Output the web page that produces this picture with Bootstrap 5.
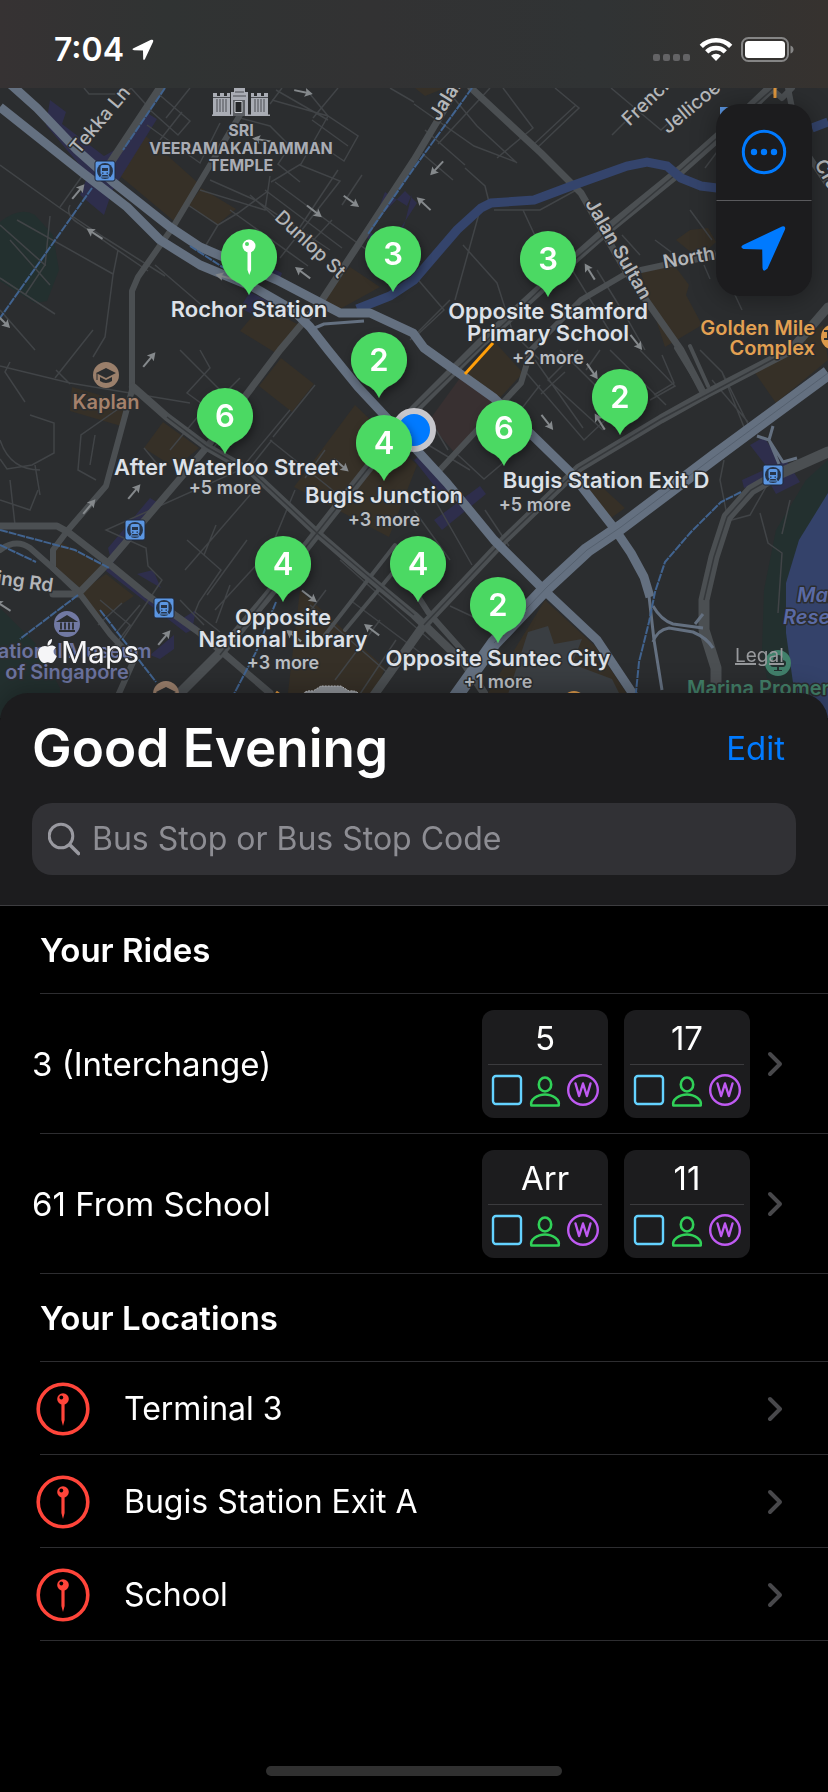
<!DOCTYPE html>
<html lang="en" data-bs-theme="dark">
<head>
<meta charset="utf-8">
<meta name="viewport" content="width=device-width, initial-scale=1">
<title>Bus Stops</title>
<link href="https://cdn.jsdelivr.net/npm/bootstrap@5.3.0/dist/css/bootstrap.min.css" rel="stylesheet">
<style>
  body { background: #000; color: #fff; font-family: Inter, "Liberation Sans", sans-serif; font-size: 32px; line-height: 40px; }
  .app { min-height: 100vh; }
  .statusbar { height: 88px; padding: 12px 34px 0 54px; background: linear-gradient(90deg, #363233, #303333 20%, #323233 45%, #303334 72%, #36322f); }
  .clock { font-size: 32px; font-weight: 600; }
  .map-area { height: 630px; background: #2b2d2f; }
  .map-tools { top: 16px; right: 16px; width: 96px; background: #1c1c1e; border-radius: 24px; box-shadow: 0 2px 24px rgba(0,0,0,.35); }
  .map-tools .btn { height: 96px; border-radius: 0; }
  .map-tools .btn + .btn { border-top: 1px solid #5a5a5d; }
  .sheet-head { margin-top: -25px; padding: 32px 32px 30px; background: #1c1c1e; border-bottom: 1px solid #3d3d40; border-radius: 28px 28px 0 0; box-shadow: 0 -4px 24px rgba(0,0,0,.25); }
  .greeting { font-size: 53px; line-height: 46px; font-weight: 600; }
  .edit-btn { color: #007aff; font-size: 33px; line-height: 40px; padding: 0 11px; }
  .search { height: 72px; margin-top: 32px; padding: 0 16px; background: #313135; border-radius: 20px; gap: 12px; }
  .search input { font-size: 32px; line-height: 40px; color: #fff; outline: 0; }
  .search input::placeholder { color: #8d8d93; opacity: 1; }
  .divided { position: relative; }
  .divided::after { content: ""; position: absolute; left: 40px; right: 0; bottom: 0; border-bottom: 1px solid #2d2d30; }
  .group-title { height: 88px; padding: 0 40px; font-size: 33px; font-weight: 600; line-height: 40px; }
  .ride { height: 140px; padding: 0 44px 0 32px; font-size: 33px; }
  .place { height: 93px; padding: 0 44px 0 36px; }
  .place-name { margin-left: 34px; }
  a.divided { color: #fff; text-decoration: none; }
  .arrival { width: 126px; height: 108px; padding: 6px; background: #1c1c1e; border-radius: 12px; }
  .arrival-time { height: 49px; line-height: 44px; text-align: center; border-bottom: 1px solid #3b3b3e; }
  .home-bar { width: 296px; height: 10px; margin: auto auto 16px; border-radius: 5px; background: #303030; }
  svg { display: block; flex: none; }
  .lbl { font-size: 22px; font-weight: 600; fill: #dde1e8; text-anchor: middle; paint-order: stroke; stroke: #2b2d2f; stroke-width: 3px; stroke-linejoin: round; }
  .more { font-size: 18px; fill: #b9bdc2; }
  .street { font-size: 19px; font-weight: 500; fill: #b4b6b9; }
  .sight { font-size: 16px; font-weight: 700; fill: #a9acb4; }
  .poi { font-size: 20px; }
  .pin-num { font-size: 31px; font-weight: 600; fill: #fff; text-anchor: middle; }
</style>
</head>
<body>
<svg width="0" height="0" class="position-absolute" aria-hidden="true">
  <symbol id="i-chev" viewBox="0 0 16 26"><path d="M3 3l10 10L3 23" fill="none" stroke="#48484b" stroke-width="4" stroke-linecap="round" stroke-linejoin="round"/></symbol>
  <symbol id="i-load" viewBox="0 0 108 34">
    <rect x="2" y="3" width="28" height="28" rx="3" fill="none" stroke="#64d2ff" stroke-width="2.4"/>
    <g fill="none" stroke="#30d158" stroke-width="2.6"><ellipse cx="54" cy="11.500" rx="6.200" ry="7"/><path d="M40.300 32.500c-1.500-6 6-11 13.700-11s15.200 5 13.700 11z" stroke-linejoin="round"/></g>
    <circle cx="92" cy="17" r="14.800" fill="none" stroke="#bf5af2" stroke-width="2.400"/>
    <path d="M84.500 10.500l3.600 12.500 3.900-12.500 3.900 12.500 3.600-12.500" fill="none" stroke="#bf5af2" stroke-width="2.400" stroke-linejoin="round" stroke-linecap="round"/>
  </symbol>
  <symbol id="i-place" viewBox="0 0 54 54"><circle cx="27" cy="27" r="24.800" fill="none" stroke="#ff453a" stroke-width="3.600"/><path d="M25.400 21h3.200v17l-1.600 6-1.600-6z" fill="#ff453a"/><circle cx="27" cy="17" r="5.800" fill="#ff453a"/><circle cx="25.300" cy="15.500" r="1.900" fill="#000"/></symbol>
</svg>

<main class="app d-flex flex-column">
  <header class="statusbar d-flex align-items-center justify-content-between">
    <div class="d-flex align-items-center gap-2">
      <span class="clock">7:04</span>
      <svg width="22" height="22" viewBox="0 0 22 22" aria-hidden="true"><path d="M1 9.500L19 .8q3-.8 2 2.200L13 20q-1.200 2.200-1.800 0L11 11.500 2 11.300q-2.500-.6-1-1.800z" fill="#fff"/></svg>
    </div>
    <div class="d-flex align-items-center">
      <svg width="142" height="28" viewBox="0 0 142 28" aria-hidden="true">
        <g fill="#636365"><rect x="1" y="18" width="7" height="7" rx="2"/><rect x="11" y="18" width="7" height="7" rx="2"/><rect x="21" y="18" width="7" height="7" rx="2"/><rect x="31" y="18" width="7" height="7" rx="2"/></g>
        <g fill="none" stroke="#fff" stroke-width="4.600"><path d="M49.300 10.300a21 21 0 0 1 29.400 0"/><path d="M54.700 15.800a13.400 13.400 0 0 1 18.600 0"/></g><path d="M64 25l-5-5.300a7.500 7.500 0 0 1 10 0z" fill="#fff"/>
        <rect x="90" y="2" width="46" height="23" rx="6.500" fill="none" stroke="#858585" stroke-width="2"/><rect x="93" y="5" width="40" height="17" rx="3.500" fill="#fff"/><path d="M138.500 9.500q3 1 3 4t-3 4z" fill="#858585"/>
      </svg>
    </div>
  </header>

  <section class="map-area position-relative overflow-hidden" aria-label="Map">
    <svg width="100%" height="630" viewBox="0 88 828 630" preserveAspectRatio="xMidYMid slice">
      <defs>
        <symbol id="pin" viewBox="-40 -40 80 90" overflow="visible"><path d="M0 38C-3 32-6 28-12 25.300A28 28 0 1 1 12 25.300C6 28 3 32 0 38z" fill="#4cd964"/></symbol>
        <filter id="sh" x="-30%" y="-30%" width="170%" height="170%"><feDropShadow dx="2" dy="4" stdDeviation="4" flood-color="#000" flood-opacity=".4"/></filter>
        <g id="arw" fill="none" stroke="#85898c" stroke-width="2"><path d="M-9 0H5"/><path d="M2-4.500L10 0 2 4.500 3.500 0z" fill="#85898c" stroke="none"/></g>
        <g id="mrt"><rect x="-10" y="-10" width="20" height="20" rx="2" fill="#5b96e2" stroke="#20283a"/><circle r="8" fill="#263449"/><rect x="-4.500" y="-6" width="9" height="10" rx="2" fill="#5b96e2"/><path d="M-3-3h6v3h-6zM-3 1.500h1.500v1.200H-3zM1.500 1.500H3v1.200H1.500z" fill="#263449"/><path d="M-3 4l-2 3M3 4l2 3M-4 6h8" stroke="#5b96e2"/></g>
        <g id="school"><circle r="13" fill="#9a7f6b"/><path d="M-10-2L0-7 10-2 0 3zM-6 2v4q6 4 12 0V2L0 5z" fill="#2b2d2f"/><path d="M-9-2v7" stroke="#2b2d2f"/></g>
      </defs>
      <rect y="88" width="828" height="630" fill="#2b2d2f"/>
      <g fill="#23302f"><path d="M0 222q20-16 35-7l18 20 6 35-12 31-12 2-35-22z"/><path d="M0 608l35 35 25 45v30H0z"/><path d="M828 460l-22 20-30 50-12 60-2 60 12 68h54z"/></g>
      <path d="M828 493l-29 47-13 43v50l12 85h30z" fill="#34426a"/>
      <g fill="#363027"><path d="M139 130l58 52-22 40-62-52zM201 188l35 21-19 16-28-20zM350 267l30 20-40 22-22-8zM262 305l37 20-20 30-39-24zM72 387l52 15-3 24-51-15zM163 422l36 26-24 20-31-20zM281 358l33 26-22 28-33-26zM56 540l47 24-18 28-32-26zM80 592l26-18 28 22-30 20-12-1zM355 405l62 60-28 72-95-50z"/><path d="M641 273l33-8 15 20-3 10 16 30-37 22zM676 240l14-10 18-2 8 14-18 16zM753 370l70-45 5 35-52 43zM493 340l30 33-28 30-32-24zM581 468l44 40-14 10-28-36zM545 600l50 46 40 60H480zM300 590l85 78-20 50h-80zM415 88h30l-20 8z"/></g>
      <path d="M460 378l38 28-44 46-26-30z" fill="#383031"/>
      <path d="M528 632l20-6 6 18 28-5-10 25 40 15 20 40H500z" fill="#3a3e42"/>
      <g fill="#2e2e4c"><path d="M50 100l16 12-4 12 42 32 18-10 25-33 10 6-45 72-8 24-24-20 8-20-42-50zM385 192l22 14 5-12-10 40-12 12-20-14zM362 235l25 14 30-46-12-12zM262 263l20 10-4 12-14-6zM250 292l20 10-14 14-16-8zM108 548l42-50 10 6-48 60zM108 565l90 62-12 6-80-62zM137 574l16-4 8 18zM180 620l16-10-4 20zM150 655l24-20v14l-14 10zM434 520l46-34 6 8-44 36zM420 455l30 35-6 8-30-38zM750 445l14-8 16 24-10 10zM742 480l44-20 14 22-24 12-8-14-24 8z"/></g>
      <!-- side streets -->
      <g fill="none" stroke="#414447" stroke-width="1.500">
        <path d="M0 165l60 43 45 30 60 38M60 207l25-35M17 220l96 54M0 278l55 36M118 250l-5 25-8 62-12 20M50 216l-5 50M155 265l50 43M93 330l-38 48M0 310l35 40M70 205q-5 10 8 18l70 48M84 88l5 6 36 0 6-6 20 22M150 110l28 25 12-14-35-30M190 88l-24 30M147 125l53 38 20-40M160 140l22-28M240 118l30 8 20 20-12 18 22 18M272 100l56 16 30 20-14 25-30-20M270 104l12-16M328 116l-27 48-30 18M310 94l18 22M338 88l-25 30M312 120l36 26M390 88l24 14M300 165l40 16-60 77M276 90l52 30M200 190l65 20 5-34M210 180l45 20 75 50M265 190l77 58M230 210l78 56M188 205l30 20 20-12 30-22M218 225l-12 20M338 170l-40 60M275 182l100 74M362 175l-20 30M250 195l70 62M308 246l24-26"/>
        <path d="M414 104l60 42 42 16M447 90l30 36 40 37M490 88l-52 56M503 88l30 40-36 30M555 88l24 20-42 40M611 88l50 42 15-14M576 105l-43 40M612 135l40-40M425 130l40 35M418 150l35 30M465 168l20 18 5 20M480 210l-25 90M494 210h46l40-22M523 210l28 60M463 245l34 38 16 50 30 30M414 275l30 35-30 28M450 300l-40 40M560 250l55 90M580 255l-24 30M597 270l28 45 20 35M640 255l-18-20M690 210l22 30M655 240l16 12 2 12M704 265l6 14M714 250l28 60M765 88l-60 80"/>
        <path d="M0 366l70 17 120 20M10 362l-5 10 20 30M30 415l24 8v30l-22 12-25 4-7-10M70 384l-14-14M131 400l-50 35-3 35 18 10M95 435l-5 30M35 465l5 30M180 350l40 40-50 60M200 350l10 18-23 25 44 32-20 26M144 448l18 22M240 378l-40 40M270 440l60 48 12 12M272 440l-20 25M315 385l-42 52M325 450l-20 28M290 410l-50 60-134 60 40 18 2 18 14 14-40 60M187 540l34 30-22 32-4 10 25 20M216 525l-12 30M250 495l-65 75M295 490l-25 60-55 60M247 540l-40 55M230 585l-14 38M100 600l30 25-30 40M122 603l-24 22M140 605l-24 28M180 600l24 25"/>
        <path d="M524 370l60 70 35-33M535 360l48 68M560 350l60 60M578 350l-30 30 55 50M540 385l-35 45M600 350l-14 20M640 350l35 36-25 14M662 355l12 28-20 12M610 350l56 55M565 372l-24 22M600 380l20 30M700 350l22 22 30 60M722 372l24 60M712 380l36 42M458 455l26 24 26-22M430 420l18 30M420 440l50 30M414 510l36 50M432 495l40 70M485 510l24 36M500 600l-20 20-30-14M724 460l-4 20 8 40M770 480l-20 35-22 6M760 513l8 30 14 10-4 60M340 560l90 80M350 600l80 60M380 620l-45 60M396 640l-40 60M790 500l-8 34M310 605l80 70M326 590l-15 20"/>
        <path d="M0 440q10 30 40 30M0 500l30 10 8-20M10 480l5 45M0 225l45 40-20 30M10 240l40 45"/>
      </g>
      <!-- roads -->
      <g fill="none" stroke="#4b4f52" stroke-linejoin="round" stroke-linecap="round">
        <path d="M162 85l-53 80" stroke-width="8"/>
        <path d="M243 110l-70 117-35 50-6 14v99l-26 96-38 44-15 20v18l27 26 30 40 24 26-18 40" stroke-width="6"/>
        <path d="M459 85L414 160 322 300l-42 50-73 97-99 116-30 31H53" stroke-width="7"/>
        <path d="M774 85l-40 38-53 47-74 60-60 53-66 60-67 67-97 123-50 64-47 56-45 45" stroke-width="10"/>
        <path d="M471 88l70 65 40 40 46 80 54 77 24 46" stroke-width="7"/>
        <path d="M716 256l-52 9-37 8-46 27-50 50-10 33-84 90" stroke-width="6"/>
        <path d="M828 307l-37 43-87 45-43 24-82 49-75 72-80 85-50 70" stroke-width="9"/>
        <path d="M133 387l34 30 40 30 46 26 64 60 46 40 51 42 50 48 20 30" stroke-width="8"/>
        <path d="M0 526h57l11 6 40 31 39 32 53 38 70 60" stroke-width="7"/>
        <path d="M0 550q16-12 30-2l50 44M414 590l14 22 40 45" stroke-width="6"/>
        <path d="M828 452l-47 21-30 17-24 27-13 40-10 43v30l12 38v30" stroke-width="11"/>
        <path d="M770 88l12 10 10-10M788 88l4 20M828 185l-24-36" stroke-width="6"/>
        <path d="M676 348l28 46M690 346l18 40M395 545l-70 90M420 540l-75 90" stroke-width="4"/>
      </g>
      <g fill="none" stroke="#35383b" stroke-width="1.500"><path d="M167 417l40 30 46 26 64 60 97 82M791 350l-130 69-82 49-75 72-80 85M774 88l-93 82-134 113-133 127-97 123-97 122M781 473l-30 17-24 27-13 40-10 43"/></g>
      <path d="M357 309l33-13 24-16 43-50 24-22 10-5 43-3 40-15 53-19 20-4 20 4 14 12 20 8 16 2M812 128l16-6" fill="none" stroke="#34446c" stroke-width="9"/>
      <g fill="none" stroke="#647080" stroke-linejoin="round">
        <path d="M8 82l29 26 40 42 36 32 57 45 30 20 77 33 63 33h30l43 20 11 15 70 50 77 75 43 55 17 25 13 24 6 20" stroke-width="9"/>
        <path d="M0 107l83 66 44 34 33 33 40 25 53 22 40 23 17 17 18 23 30 37 56 60 33 36 47 57 37 37 16 16 50 47 40 60" stroke-width="9"/>
        <path d="M828 373l-114 84-93 70-34 23-40 37-53 56-50 70" stroke-width="14"/>
        <path d="M649 596l5 44 8 50M653 606q8 14 20 18l30 4M653 642q4-12 16-14l24 4q14 6 20 16M695 624l8-10M757 436l12 4 14 22 14-4M773 426l-4 14 10 24M310 330l14-6 40-3" stroke-width="3"/>
      </g>
      <g fill="none" stroke="#55606e" stroke-width="1"><path d="M828 373l-114 84-93 70-34 23-40 37-53 56"/></g>
      <g fill="none" stroke="#41638f" stroke-width="2" stroke-dasharray="8 1"><path d="M165 88l-42 62M92 188L0 318M472 88l-58 80-46 66M0 530l75 20 34 18M0 545l36 17M78 595l-58 44M100 610l56 72M276 602l-20 50-22 42M741 492l-20 10-30 30-26 30-10 30-6 30-10 40-4 40M190 246l34 22"/></g>
      <path d="M493 343l-28 31" stroke="#ff9f0a" stroke-width="3"/><path d="M276 692l8 6M775 88v10" stroke="#e0973d" stroke-width="3"/>
      <path d="M740 107h12l-12 12h-20v-12z" fill="#5b96e2"/>
      <!-- one-way arrows -->
      <use href="#arw" transform="translate(78 192) rotate(-50)"/><use href="#arw" transform="translate(95 234) rotate(213)"/><use href="#arw" transform="translate(314 211) rotate(38)"/><use href="#arw" transform="translate(351 201) rotate(36)"/><use href="#arw" transform="translate(303 273) rotate(217)"/><use href="#arw" transform="translate(303 92) rotate(12)"/><use href="#arw" transform="translate(225 277) rotate(195)"/><use href="#arw" transform="translate(437 168) rotate(133)"/><use href="#arw" transform="translate(424 204) rotate(223)"/><use href="#arw" transform="translate(590 272) rotate(238)"/><use href="#arw" transform="translate(636 342) rotate(52)"/><use href="#arw" transform="translate(592 371) rotate(55)"/><use href="#arw" transform="translate(547 422) rotate(52)"/><use href="#arw" transform="translate(600 422) rotate(238)"/><use href="#arw" transform="translate(149 360) rotate(-50)"/><use href="#arw" transform="translate(134 492) rotate(-50)"/><use href="#arw" transform="translate(89 507) rotate(-50)"/><use href="#arw" transform="translate(164 638) rotate(-50)"/><use href="#arw" transform="translate(309 596) rotate(38)"/><use href="#arw" transform="translate(372 630) rotate(217)"/><use href="#arw" transform="translate(294 636) rotate(217)"/><use href="#arw" transform="translate(341 465) rotate(40)"/><use href="#arw" transform="translate(3 606) rotate(213)"/><use href="#arw" transform="translate(3 321) rotate(45)"/><use href="#arw" transform="translate(262 140) rotate(190)"/>
      <!-- landmarks -->
      <g fill="#a9acb4"><path d="M213 93h4v3h3v-3h4v3h3v-3h3v22h-17zM251 93h3v3h3v-3h4v3h3v-3h4v22h-17zM234 88h11v4h3v24h-17V92h3zM212 114.500h58v1.500h-58z"/></g>
      <path d="M217 99v13M220 99v13M223 99v13M226 99v13M255 99v13M258 99v13M261 99v13M264 99v13M213 97.500h17M251 97.500h17M233 96h13M235 92h9" stroke="#4a4d52"/><path d="M233 100h12v16h-12z" fill="#5b5e63"/><path d="M235 101.500h7v11h-7z" fill="#232527" stroke="#c6c9ce"/>
      <path d="M303 694q3-4 10-3l8-5h20l8 5q7-1 10 3z" fill="#8f9398" stroke="#c0c3c7" stroke-dasharray="2 1"/>
      <use href="#mrt" x="105" y="171"/><use href="#mrt" x="135" y="530"/><use href="#mrt" x="164" y="608"/><use href="#mrt" x="773" y="475"/>
      <use href="#school" x="106" y="375"/><use href="#school" x="166" y="694"/>
      <g transform="translate(67 624)"><circle r="13" fill="#7179a3"/><path d="M-8-3l8-5 8 5zM-6-1.500v7M-2-1.500v7M2-1.500v7M6-1.500v7M-8 7H8" fill="#2b2d2f" stroke="#2b2d2f" stroke-width="1.800"/></g>
      <circle cx="574" cy="703" r="12" fill="#dd9a4b"/><circle cx="834" cy="337" r="13" fill="#dd9a4b"/><path d="M824 331h4v8h-4" fill="none" stroke="#2b2d2f" stroke-width="2"/>
      <g transform="translate(778 663)"><circle r="13" fill="#41806b"/><path d="M0-8a5 5 0 0 1 5 5 3.500 3.500 0 0 1-1 7h-8a3.500 3.500 0 0 1-1-7 5 5 0 0 1 5-5zM-1 3h2v4h3v1h-8V7h3z" fill="#23302f"/></g>
      <!-- place names -->
      <g class="lbl">
        <g class="street"><text transform="translate(105 124) rotate(-50)">Tekka Ln</text><text transform="translate(306 249) rotate(43)">Dunlop St</text><text transform="translate(452 101) rotate(-58)" font-weight="600">Jalan</text><text transform="translate(652 105) rotate(-44)">French</text><text transform="translate(695 112) rotate(-40)">Jellicoe</text><text transform="translate(613 252) rotate(60)" font-weight="600">Jalan Sultan</text><text transform="translate(690 264) rotate(-10)" font-weight="600">North</text><text transform="translate(822 178) rotate(60)" font-weight="600">Cra</text><text transform="translate(24 588) rotate(8)" font-weight="600">ing Rd</text></g>
        <g class="sight"><text x="241" y="136">SRI</text><text x="241" y="154">VEERAMAKALIAMMAN</text><text x="241" y="171">TEMPLE</text></g>
        <g class="poi"><text x="106" y="409" fill="#a5816b">Kaplan</text><text x="815" y="335" text-anchor="end" style="text-anchor:end" fill="#e2a052">Golden Mile</text><text x="815" y="355" style="text-anchor:end" fill="#e2a052">Complex</text><text x="67" y="658" fill="#6b739f">National Museum</text><text x="67" y="679" fill="#6b739f">of Singapore</text><text x="797" y="602" style="text-anchor:start" fill="#5a6aa5" font-style="italic">Marina</text><text x="783" y="624" style="text-anchor:start" fill="#5a6aa5" font-style="italic">Reservoir</text><text x="687" y="695" style="text-anchor:start" fill="#438069">Marina Promenade</text></g>
        <text x="249" y="317">Rochor Station</text><text x="548" y="319">Opposite Stamford</text><text x="548" y="341">Primary School</text><text class="more" x="548" y="364">+2 more</text>
        <text x="226" y="475">After Waterloo Street</text><text class="more" x="225" y="494">+5 more</text>
        <text x="384" y="503">Bugis Junction</text><text class="more" x="384" y="526">+3 more</text>
        <text x="606" y="488">Bugis Station Exit D</text><text class="more" x="535" y="511">+5 more</text>
        <text x="283" y="625">Opposite</text><text x="283" y="647">National Library</text><text class="more" x="283" y="669">+3 more</text>
        <text x="498" y="666">Opposite Suntec City</text><text class="more" x="498" y="688">+1 more</text>
      </g>
      <circle cx="414" cy="430" r="19" fill="#007aff" stroke="#c7c7cc" stroke-width="6"/>
      <g filter="url(#sh)">
        <use href="#pin" x="209" y="217" width="80" height="90"/><use href="#pin" x="353" y="214" width="80" height="90"/><use href="#pin" x="508" y="219" width="80" height="90"/><use href="#pin" x="339" y="320" width="80" height="90"/><use href="#pin" x="185" y="376" width="80" height="90"/><use href="#pin" x="344" y="403" width="80" height="90"/><use href="#pin" x="464" y="388" width="80" height="90"/><use href="#pin" x="580" y="357" width="80" height="90"/><use href="#pin" x="243" y="524" width="80" height="90"/><use href="#pin" x="378" y="524" width="80" height="90"/><use href="#pin" x="458" y="565" width="80" height="90"/>
      </g>
      <path d="M247.500 248h3.600v22l-1.800 5-1.800-5z" fill="#fff"/><circle cx="249" cy="246" r="6.500" fill="#fff"/><circle cx="247" cy="244" r="2" fill="#4cd964"/>
      <g class="pin-num"><text x="393" y="265">3</text><text x="548" y="270">3</text><text x="379" y="371">2</text><text x="225" y="427">6</text><text x="384" y="454">4</text><text x="504" y="439">6</text><text x="620" y="408">2</text><text x="283" y="575">4</text><text x="418" y="575">4</text><text x="498" y="616">2</text></g>
      <path d="M48 646.500c2-1.200 5.500-1.800 8 1-3.500 2-3 7 .8 8.500-1.200 3.500-3.500 7-5.500 7-1.500 0-2-.8-3.600-.8s-2.200.8-3.700.8c-3 0-6-5.500-6-9.500 0-6 5-9 10-7zM47.500 645.500c0-4 2-6 4.500-6.500 0 4-2 6.500-4.500 6.500z" fill="#f5f5f7"/>
      <text x="61" y="663" font-size="30" fill="#f5f5f7" style="paint-order:stroke;stroke:#2b2d2f;stroke-width:2px">Maps</text>
      <a href="#legal"><text x="735" y="662" font-size="19" fill="#97999c" text-decoration="underline">Legal</text></a>
    </svg>
    <div class="map-tools position-absolute overflow-hidden d-flex flex-column">
      <button type="button" class="btn p-0 d-flex align-items-center justify-content-center" aria-label="More"><svg width="46" height="46" viewBox="0 0 46 46"><circle cx="23" cy="23" r="20.700" fill="none" stroke="#007aff" stroke-width="3"/><g fill="#007aff"><circle cx="13" cy="23" r="3.200"/><circle cx="23" cy="23" r="3.200"/><circle cx="33" cy="23" r="3.200"/></g></svg></button>
      <button type="button" class="btn p-0 d-flex align-items-center justify-content-center" aria-label="Show my location"><svg width="46" height="46" viewBox="0 0 46 46"><path d="M2 20L41 1.500q4-1 3 3L26.500 43.500q-4.500 4.500-5-.5L21.200 24.500 2.500 24q-4-1.500-.5-4z" fill="#007aff"/></svg></button>
    </div>
  </section>

  <section class="sheet-head position-relative">
    <div class="d-flex align-items-center justify-content-between">
      <h1 class="greeting m-0">Good Evening</h1>
      <button type="button" class="btn edit-btn border-0">Edit</button>
    </div>
    <label class="search d-flex align-items-center">
      <svg width="32" height="34" viewBox="0 0 32 34" aria-hidden="true"><g fill="none" stroke="#9999a0" stroke-width="3" stroke-linecap="round"><circle cx="13" cy="14" r="11.800"/><path d="M22 23l8.500 8.500" stroke-width="3.600"/></g></svg>
      <input type="search" class="flex-grow-1 border-0 bg-transparent p-0" placeholder="Bus Stop or Bus Stop Code" aria-label="Bus Stop or Bus Stop Code">
    </label>
  </section>

  <section>
    <h2 class="group-title divided d-flex align-items-center m-0">Your Rides</h2>
    <a href="#ride-3" class="ride divided d-flex align-items-center gap-3">
      <span class="flex-grow-1">3 (Interchange)</span>
      <span class="arrival"><span class="arrival-time d-block">5</span><svg class="mx-auto mt-2" width="108" height="34"><use href="#i-load"/></svg></span>
      <span class="arrival"><span class="arrival-time d-block">17</span><svg class="mx-auto mt-2" width="108" height="34"><use href="#i-load"/></svg></span>
      <svg width="18" height="26"><use href="#i-chev"/></svg>
    </a>
    <a href="#ride-61" class="ride divided d-flex align-items-center gap-3">
      <span class="flex-grow-1">61 From School</span>
      <span class="arrival"><span class="arrival-time d-block">Arr</span><svg class="mx-auto mt-2" width="108" height="34"><use href="#i-load"/></svg></span>
      <span class="arrival"><span class="arrival-time d-block">11</span><svg class="mx-auto mt-2" width="108" height="34"><use href="#i-load"/></svg></span>
      <svg width="18" height="26"><use href="#i-chev"/></svg>
    </a>
  </section>
  <section>
    <h2 class="group-title divided d-flex align-items-center m-0">Your Locations</h2>
    <a href="#terminal-3" class="place divided d-flex align-items-center"><svg width="54" height="54"><use href="#i-place"/></svg><span class="place-name flex-grow-1">Terminal 3</span><svg width="18" height="26"><use href="#i-chev"/></svg></a>
    <a href="#bugis-exit-a" class="place divided d-flex align-items-center"><svg width="54" height="54"><use href="#i-place"/></svg><span class="place-name flex-grow-1">Bugis Station Exit A</span><svg width="18" height="26"><use href="#i-chev"/></svg></a>
    <a href="#school" class="place divided d-flex align-items-center"><svg width="54" height="54"><use href="#i-place"/></svg><span class="place-name flex-grow-1">School</span><svg width="18" height="26"><use href="#i-chev"/></svg></a>
  </section>
  <div class="home-bar"></div>
</main>
<script src="https://cdn.jsdelivr.net/npm/bootstrap@5.3.0/dist/js/bootstrap.bundle.min.js"></script>
</body>
</html>
